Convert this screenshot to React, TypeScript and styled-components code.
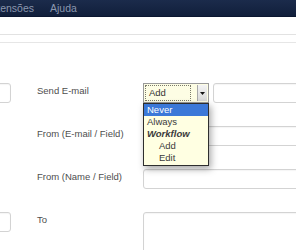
import React from 'react';
import styled, { createGlobalStyle } from 'styled-components';

const GlobalStyle = createGlobalStyle`
  html, body {
    margin: 0;
    padding: 0;
    background: #ffffff;
    overflow: hidden;
  }
  body {
    font-family: "Liberation Sans", Arial, sans-serif;
  }
`;

const Page = styled.div`
  width: 296px;
  height: 250px;
  overflow: hidden;
  background: #ffffff;
`;

const MenuBar = styled.div`
  height: 17px;
  background: linear-gradient(#1b2b4b, #111f3b);
  border-bottom: 1px solid #0b1630;
  box-sizing: border-box;
  display: flex;
  align-items: center;
  gap: 16px;
  margin-left: -15px;
`;

const MenuItem = styled.span`
  color: #8a96ae;
  font-size: 10.5px;
  line-height: 12px;
`;

const TabStrip = styled.div`
  height: 17px;
  border-bottom: 1px solid #e2e2e2;
`;

const SubStrip = styled.div`
  height: 7px;
  border-bottom: 1px solid #e6e6e6;
`;

const Form = styled.div`
  margin-left: -40px;
  padding-top: 40px;
  display: grid;
  grid-template-columns: 51px 80px 1fr;
  column-gap: 26px;
  grid-auto-rows: 43px;
`;

const Cell = styled.div`
  position: relative;
  display: flex;
  align-items: flex-start;
  gap: 4px;
`;

const Label = styled.div`
  font-size: 9.5px;
  line-height: 12px;
  color: #4e4e4e;
  padding-top: 2px;
  white-space: nowrap;
`;

const TextBox = styled.div<{ $w?: string; $h?: number }>`
  box-sizing: border-box;
  width: ${(p) => p.$w ?? '100%'};
  height: ${(p) => p.$h ?? 20}px;
  border: 1px solid #d3d3d3;
  border-radius: 3px;
  background: #ffffff;
  box-shadow: inset 0 1px 1px rgba(0, 0, 0, 0.04);
  flex-shrink: 0;
`;

const SideBox = styled(TextBox)`
  width: 51px;
`;

const Wide = styled(TextBox)`
  width: 200px;
`;

const Select = styled.div`
  box-sizing: border-box;
  width: 66px;
  height: 20px;
  flex-shrink: 0;
  border: 1px solid #9a9a9a;
  background: #fdfde4;
  display: flex;
  align-items: stretch;
  padding: 1px;
  gap: 2px;
`;

const SelectValue = styled.div`
  flex: 1;
  border: 1px dotted #7a7a6a;
  font-size: 9.5px;
  line-height: 14px;
  color: #333333;
  padding-left: 3px;
  margin-right: 4px;
`;

const Arrow = styled.div`
  width: 9px;
  background: linear-gradient(#f4f4f4, #d8d8d8);
  border-left: 1px solid #a8a8a8;
  display: flex;
  align-items: center;
  justify-content: center;
`;

const DropList = styled.div`
  position: absolute;
  top: 20px;
  left: 0;
  width: 66px;
  box-sizing: border-box;
  background: #ffffe2;
  border: 1px solid #2e2e2e;
  box-shadow: 2px 3px 7px rgba(0, 0, 0, 0.35);
  padding-bottom: 1px;
  z-index: 2;
`;

const Option = styled.div<{ $active?: boolean; $group?: boolean; $indent?: boolean }>`
  height: 12px;
  line-height: 12px;
  font-size: 9.5px;
  padding-left: ${(p) => (p.$indent ? '15px' : '3px')};
  color: ${(p) => (p.$active ? '#ffffff' : '#3a3a3a')};
  background: ${(p) => (p.$active ? '#3b78d8' : 'transparent')};
  font-weight: ${(p) => (p.$group ? 700 : 400)};
  font-style: ${(p) => (p.$group ? 'italic' : 'normal')};
`;

const Area = styled(TextBox)`
  width: 200px;
  height: 60px;
`;

export default function App() {
  return (
    <Page>
      <GlobalStyle />
      <MenuBar>
        <MenuItem>Extensões</MenuItem>
        <MenuItem>Ajuda</MenuItem>
      </MenuBar>
      <TabStrip />
      <SubStrip />
      <Form>
        <Cell>
          <SideBox />
        </Cell>
        <Label>Send E-mail</Label>
        <Cell>
          <Select>
            <SelectValue>Add</SelectValue>
            <Arrow>
              <svg width="5" height="3" viewBox="0 0 5 3">
                <path d="M0 0h5L2.5 3z" fill="#111" />
              </svg>
            </Arrow>
          </Select>
          <TextBox $w="120px" />
          <DropList>
            <Option $active>Never</Option>
            <Option>Always</Option>
            <Option $group>Workflow</Option>
            <Option $indent>Add</Option>
            <Option $indent>Edit</Option>
          </DropList>
        </Cell>

        <Cell />
        <Label>From (E-mail / Field)</Label>
        <Cell>
          <Wide />
        </Cell>

        <Cell />
        <Label>From (Name / Field)</Label>
        <Cell>
          <Wide />
        </Cell>

        <Cell>
          <SideBox />
        </Cell>
        <Label>To</Label>
        <Cell>
          <Area />
        </Cell>
      </Form>
    </Page>
  );
}
